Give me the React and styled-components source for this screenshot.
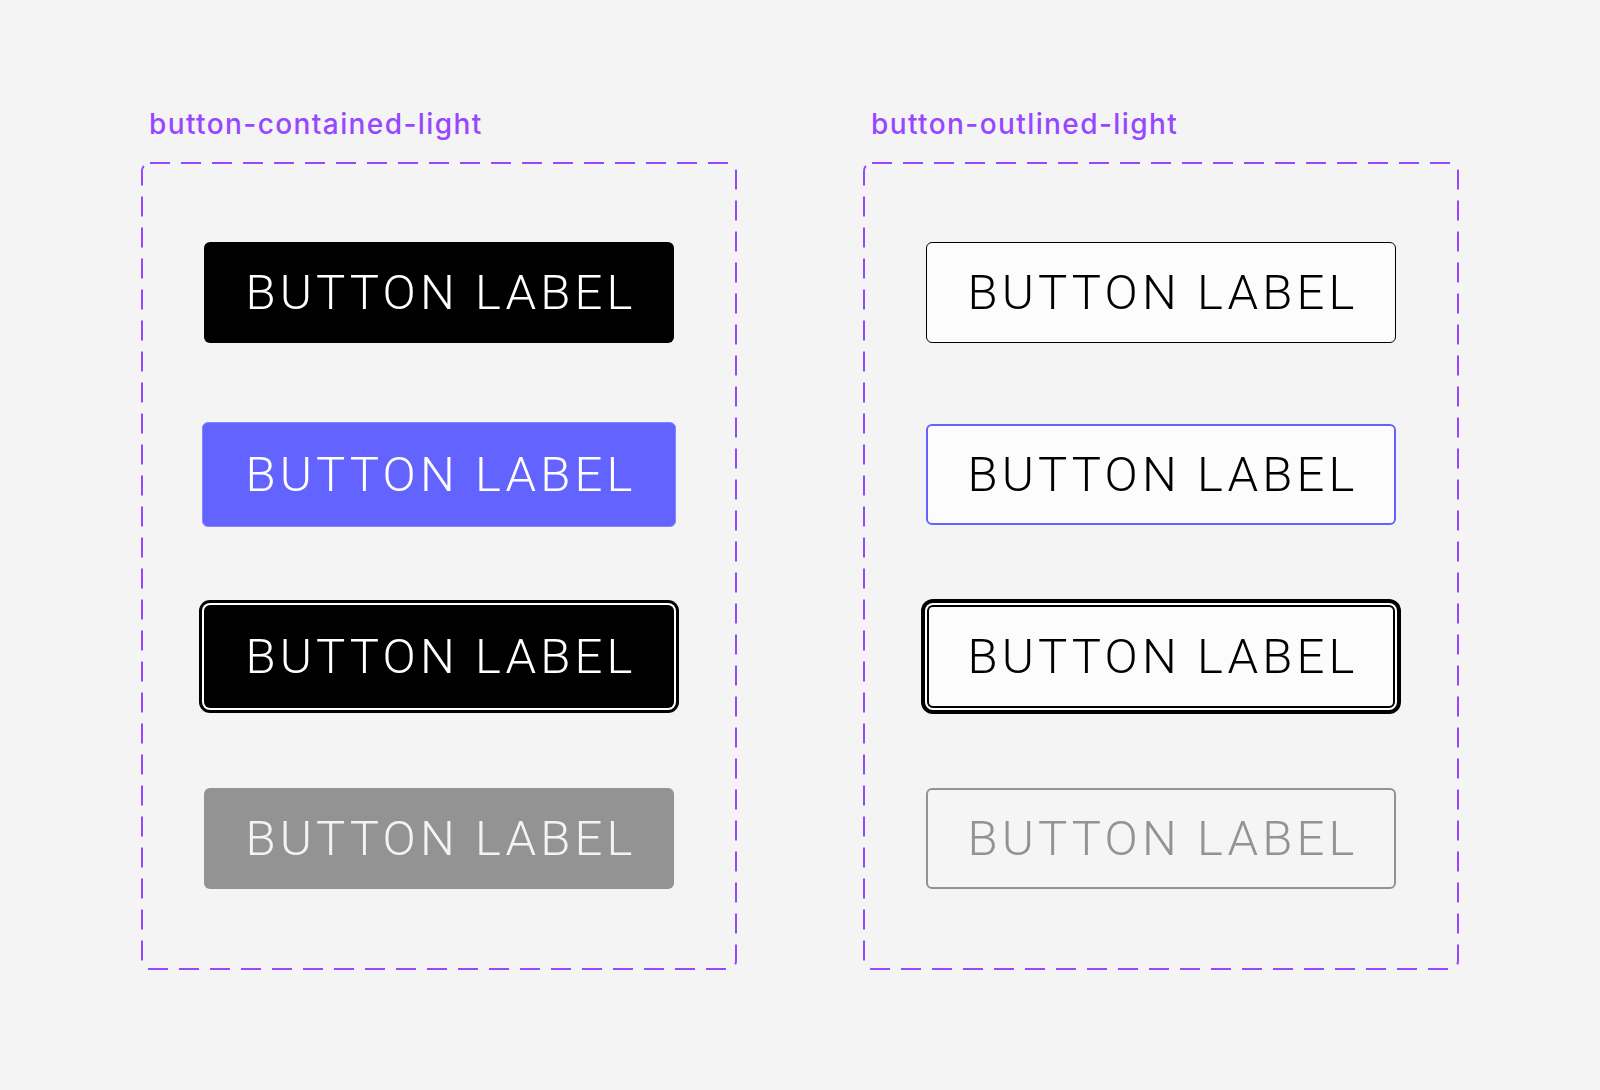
import React from "react";
import styled, { createGlobalStyle, css } from "styled-components";

const GlobalStyle = createGlobalStyle`
  html, body {
    margin: 0;
    padding: 0;
    background: #f4f4f4;
  }
`;

const dashed = `url("data:image/svg+xml,%3Csvg xmlns='http://www.w3.org/2000/svg' width='100%25' height='100%25'%3E%3Crect x='1' y='1' width='594' height='806' rx='8' ry='8' fill='none' stroke='%239747FF' stroke-width='2' stroke-dasharray='20 11'/%3E%3C/svg%3E")`;

const Page = styled.div`
  display: flex;
  gap: 126px;
  padding: 106px 0 0 141px;
  min-height: 1090px;
  box-sizing: border-box;
`;

const Column = styled.div`
  display: flex;
  flex-direction: column;
  gap: 20px;
`;

const SetLabel = styled.div`
  padding-left: 8px;
  font-family: "Inter", "Open Sans", sans-serif;
  font-size: 28px;
  font-weight: 500;
  letter-spacing: 1.4px;
  line-height: 36px;
  color: #9747ff;
`;

const Frame = styled.div`
  width: 596px;
  height: 808px;
  box-sizing: border-box;
  background-image: ${dashed};
  background-repeat: no-repeat;
  padding: 80px 0;
  display: flex;
  flex-direction: column;
  gap: 81px;
`;

const Slot = styled.div`
  height: 101px;
  display: flex;
  align-items: center;
  justify-content: center;
`;

const variants = {
  dark: css`
    background: #000;
    color: #fff;
    border: 0;
  `,
  hover: css`
    background: #6363ff;
    color: #fff;
    border: 1.5px solid #8585ff;
    width: 474px;
    height: 105px;
  `,
  focus: css`
    background: #000;
    color: #fff;
    border: 0;
    box-shadow: 0 0 0 2px #fff, 0 0 0 5px #000;
    height: 103px;
  `,
  disabled: css`
    background: #939393;
    color: #f3f3f3;
    border: 0;
  `,
  outline: css`
    background: #fcfcfc;
    color: #000;
    border: 1.5px solid #000;
  `,
  outlineHover: css`
    background: #fcfcfc;
    color: #000;
    border: 2px solid #6363ff;
  `,
  outlineFocus: css`
    background: #fcfcfc;
    color: #000;
    border: 2px solid #000;
    box-shadow: 0 0 0 2px #fff, 0 0 0 6px #000;
    height: 103px;
    width: 468px;
  `,
  outlineDisabled: css`
    background: #f5f5f5;
    color: #939393;
    border: 2px solid #939393;
  `,
};

const Button = styled.button`
  width: 470px;
  height: 101px;
  box-sizing: border-box;
  border-radius: 6px;
  display: flex;
  align-items: center;
  justify-content: center;
  padding: 0 0 0 4px;
  font-family: "Roboto", "Open Sans", sans-serif;
  font-weight: 300;
  font-size: 49px;
  letter-spacing: 0.085em;
  cursor: pointer;
  ${({ $variant }) => variants[$variant]}
`;

const sets = [
  { name: "button-contained-light", items: ["dark", "hover", "focus", "disabled"] },
  { name: "button-outlined-light", items: ["outline", "outlineHover", "outlineFocus", "outlineDisabled"] },
];

export default function App() {
  return (
    <>
      <GlobalStyle />
      <Page>
        {sets.map((set) => (
          <Column key={set.name}>
            <SetLabel>{set.name}</SetLabel>
            <Frame>
              {set.items.map((v) => (
                <Slot key={v}>
                  <Button $variant={v}>BUTTON LABEL</Button>
                </Slot>
              ))}
            </Frame>
          </Column>
        ))}
      </Page>
    </>
  );
}
